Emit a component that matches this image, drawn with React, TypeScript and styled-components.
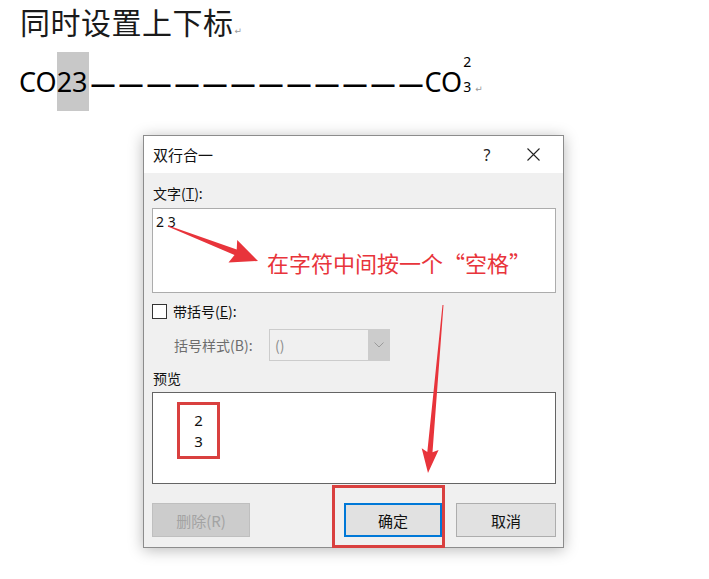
import styled, { createGlobalStyle } from 'styled-components'

const GlobalStyle = createGlobalStyle`
  body {
    margin: 0;
    background: #fff;
  }
`

const RED = '#e8343b'

// tapered arrow: thin tail, wide head
function arrowPoints(x1: number, y1: number, x2: number, y2: number, headLen: number, headHalf: number, shaftHalf: number) {
  const dx = x2 - x1
  const dy = y2 - y1
  const len = Math.hypot(dx, dy)
  const ux = dx / len
  const uy = dy / len
  const nx = -uy
  const ny = ux
  const bx = x2 - ux * headLen
  const by = y2 - uy * headLen
  const pts = [
    [x1 + nx * 0.5, y1 + ny * 0.5],
    [bx + nx * shaftHalf, by + ny * shaftHalf],
    [bx + nx * headHalf - ux * 3, by + ny * headHalf - uy * 3],
    [x2, y2],
    [bx - nx * headHalf - ux * 3, by - ny * headHalf - uy * 3],
    [bx - nx * shaftHalf, by - ny * shaftHalf],
    [x1 - nx * 0.5, y1 - ny * 0.5],
  ]
  return pts.map(p => p.map(v => v.toFixed(1)).join(',')).join(' ')
}

export default function App() {
  return (
    <Page>
      <GlobalStyle />
      <Heading>
        同时设置上下标<Mark>↵</Mark>
      </Heading>

      <Formula>
        <span>CO</span>
        <Selected>23</Selected>
        <Dashes>————————————</Dashes>
        <span>CO</span>
        <Scripts>
          <span>2</span>
          <span>3</span>
        </Scripts>
        <FormulaMark>↵</FormulaMark>
      </Formula>

      <Dialog>
        <TitleBar>
          <TitleText>双行合一</TitleText>
          <TitleButton>?</TitleButton>
          <TitleButton>
            <svg width="13" height="13" viewBox="0 0 13 13">
              <path d="M0.5 0.5 L12.5 12.5 M12.5 0.5 L0.5 12.5" stroke="#222" strokeWidth="1.1" fill="none" />
            </svg>
          </TitleButton>
        </TitleBar>

        <Body>
          <Label>文字(<u>T</u>):</Label>
          <TextArea>2 3</TextArea>

          <CheckRow>
            <CheckBox />
            <span>带括号(<u>E</u>):</span>
          </CheckRow>

          <ComboRow>
            <DimLabel>括号样式(B):</DimLabel>
            <Combo>
              <ComboValue>()</ComboValue>
              <ComboArrow>
                <svg width="10" height="6" viewBox="0 0 10 6">
                  <path d="M0.5 0.5 L5 5 L9.5 0.5" stroke="#9a9a9a" strokeWidth="1" fill="none" />
                </svg>
              </ComboArrow>
            </Combo>
          </ComboRow>

          <PreviewLabel>预览</PreviewLabel>
          <Preview>
            <Marked>
              <span>2</span>
              <span>3</span>
            </Marked>
          </Preview>

          <Buttons>
            <Button $variant="disabled">删除(R)</Button>
            <Button $variant="primary" style={{ marginLeft: 'auto' }}>确定</Button>
            <Button $wide>取消</Button>
          </Buttons>
        </Body>
      </Dialog>

      <Overlay width="709" height="579" viewBox="0 0 709 579">
        <polygon points={arrowPoints(168, 226, 258, 261, 24, 12, 3)} fill={RED} />
        <polygon points={arrowPoints(443, 305, 428, 473, 21, 8.5, 2.6)} fill={RED} />
        <rect x="333.5" y="486.5" width="110" height="60" fill="none" stroke="#d9403f" strokeWidth="3" />
      </Overlay>
      <Note>在字符中间按一个“空格”</Note>
    </Page>
  )
}

const Page = styled.div`
  position: relative;
  width: 709px;
  height: 579px;
  padding-top: 4px;
  box-sizing: border-box;
  overflow: hidden;
  background: #fff;
`

const Heading = styled.div`
  height: 40px;
  margin-left: 20px;
  font-family: "Liberation Serif", "Noto Sans CJK SC", serif;
  font-size: 30px;
  line-height: 40px;
  color: #1a1a1a;
  letter-spacing: 0.5px;
`

const Mark = styled.span`
  font-family: "DejaVu Sans", sans-serif;
  font-size: 9px;
  line-height: 1;
  color: #999;
  margin-left: 1px;
`

const Formula = styled.div`
  display: flex;
  align-items: baseline;
  height: 59px;
  margin: 8px 0 0 19px;
  font-family: "Noto Sans", sans-serif;
  font-size: 27px;
  line-height: 28px;
  color: #000;
`

const Selected = styled.span`
  display: inline-block;
  background: #c8c8c8;
  padding: 16px 1px 15px 0;
`

const Dashes = styled.span`
  font-family: "Liberation Sans", sans-serif;
  font-weight: 700;
  font-size: 23px;
  letter-spacing: 5px;
  margin-left: 3px;
  margin-right: -3px;
`

const Scripts = styled.span`
  align-self: flex-start;
  display: flex;
  flex-direction: column;
  gap: 11px;
  margin: 3px 0 0 1px;
  font-size: 14px;
  line-height: 14px;
`

const FormulaMark = styled.span`
  font-family: "DejaVu Sans", sans-serif;
  font-size: 9px;
  line-height: 1;
  color: #999;
  margin-left: 4px;
`

const Dialog = styled.div`
  margin: 24px 0 0 143px;
  width: 421px;
  height: 413px;
  box-sizing: border-box;
  border: 1px solid #8c8c8c;
  background: #f0f0f0;
  box-shadow: 0 2px 14px rgba(0, 0, 0, 0.28);
  display: flex;
  flex-direction: column;
  font-family: "Noto Sans CJK SC", sans-serif;
  font-size: 14px;
  color: #111;
`

const TitleBar = styled.div`
  height: 37px;
  flex-shrink: 0;
  background: #fff;
  display: flex;
  align-items: center;
  padding: 0 7px 0 9px;
`

const TitleText = styled.div`
  flex: 1;
  font-size: 15px;
`

const TitleButton = styled.div`
  width: 46px;
  height: 37px;
  display: flex;
  align-items: center;
  justify-content: center;
  font-family: "Noto Sans", sans-serif;
  font-size: 16px;
  color: #222;
`

const Body = styled.div`
  display: flex;
  flex-direction: column;
  padding: 0 7px 0 8px;
`

const Label = styled.div`
  margin-top: 10px;
  height: 20px;
  line-height: 20px;
  padding-left: 1px;
  font-size: 14px;
`

const TextArea = styled.div`
  margin-top: 5px;
  height: 85px;
  box-sizing: border-box;
  background: #fff;
  border: 1px solid #acacac;
  padding: 3px 3px;
  font-family: "Noto Sans", sans-serif;
  font-size: 14px;
  line-height: 20px;
`

const CheckRow = styled.div`
  margin-top: 8px;
  height: 20px;
  display: flex;
  align-items: center;
  font-size: 14px;
`

const CheckBox = styled.span`
  width: 15px;
  height: 15px;
  box-sizing: border-box;
  border: 1px solid #333;
  background: #fff;
  margin-right: 6px;
`

const ComboRow = styled.div`
  margin-top: 8px;
  height: 32px;
  display: flex;
  align-items: center;
  padding-left: 22px;
`

const DimLabel = styled.span`
  width: 95px;
  color: #6d6d6d;
  font-size: 14px;
`

const Combo = styled.div`
  width: 121px;
  height: 32px;
  box-sizing: border-box;
  border: 1px solid #cccccc;
  background: #f0f0f0;
  display: flex;
`

const ComboValue = styled.span`
  flex: 1;
  padding-left: 5px;
  line-height: 30px;
  color: #8d8d8d;
  font-size: 14px;
`

const ComboArrow = styled.span`
  width: 21px;
  background: #cccccc;
  display: flex;
  align-items: center;
  justify-content: center;
`

const PreviewLabel = styled.div`
  margin-top: 7px;
  height: 20px;
  line-height: 20px;
  padding-left: 1px;
`

const Preview = styled.div`
  margin-top: 4px;
  height: 92px;
  box-sizing: border-box;
  background: #fff;
  border: 1px solid #646464;
  padding: 9px 0 0 24px;
`

const Marked = styled.div`
  width: 43px;
  height: 57px;
  box-sizing: border-box;
  border: 3px solid #d9403f;
  padding-top: 5px;
  display: flex;
  flex-direction: column;
  align-items: center;
  font-family: "Noto Sans", sans-serif;
  font-size: 15px;
  line-height: 21px;
`

const Buttons = styled.div`
  margin-top: 19px;
  display: flex;
  gap: 14px;
`

const Button = styled.div<{ $variant?: 'primary' | 'disabled'; $wide?: boolean }>`
  width: ${p => (p.$wide ? '100px' : '98px')};
  height: 34px;
  box-sizing: border-box;
  display: flex;
  align-items: center;
  justify-content: center;
  font-size: 15px;
  background: ${p => (p.$variant === 'disabled' ? '#cccccc' : '#e1e1e1')};
  color: ${p => (p.$variant === 'disabled' ? '#a3a3a3' : '#111')};
  border: ${p =>
    p.$variant === 'primary' ? '2px solid #0078d7' : p.$variant === 'disabled' ? '1px solid #bfbfbf' : '1px solid #adadad'};
`

const Overlay = styled.svg`
  position: absolute;
  left: 0;
  top: 0;
  pointer-events: none;
`

const Note = styled.div`
  position: absolute;
  left: 267px;
  top: 246px;
  font-family: "Noto Sans CJK SC", sans-serif;
  font-size: 22px;
  line-height: 32px;
  color: ${RED};
`
